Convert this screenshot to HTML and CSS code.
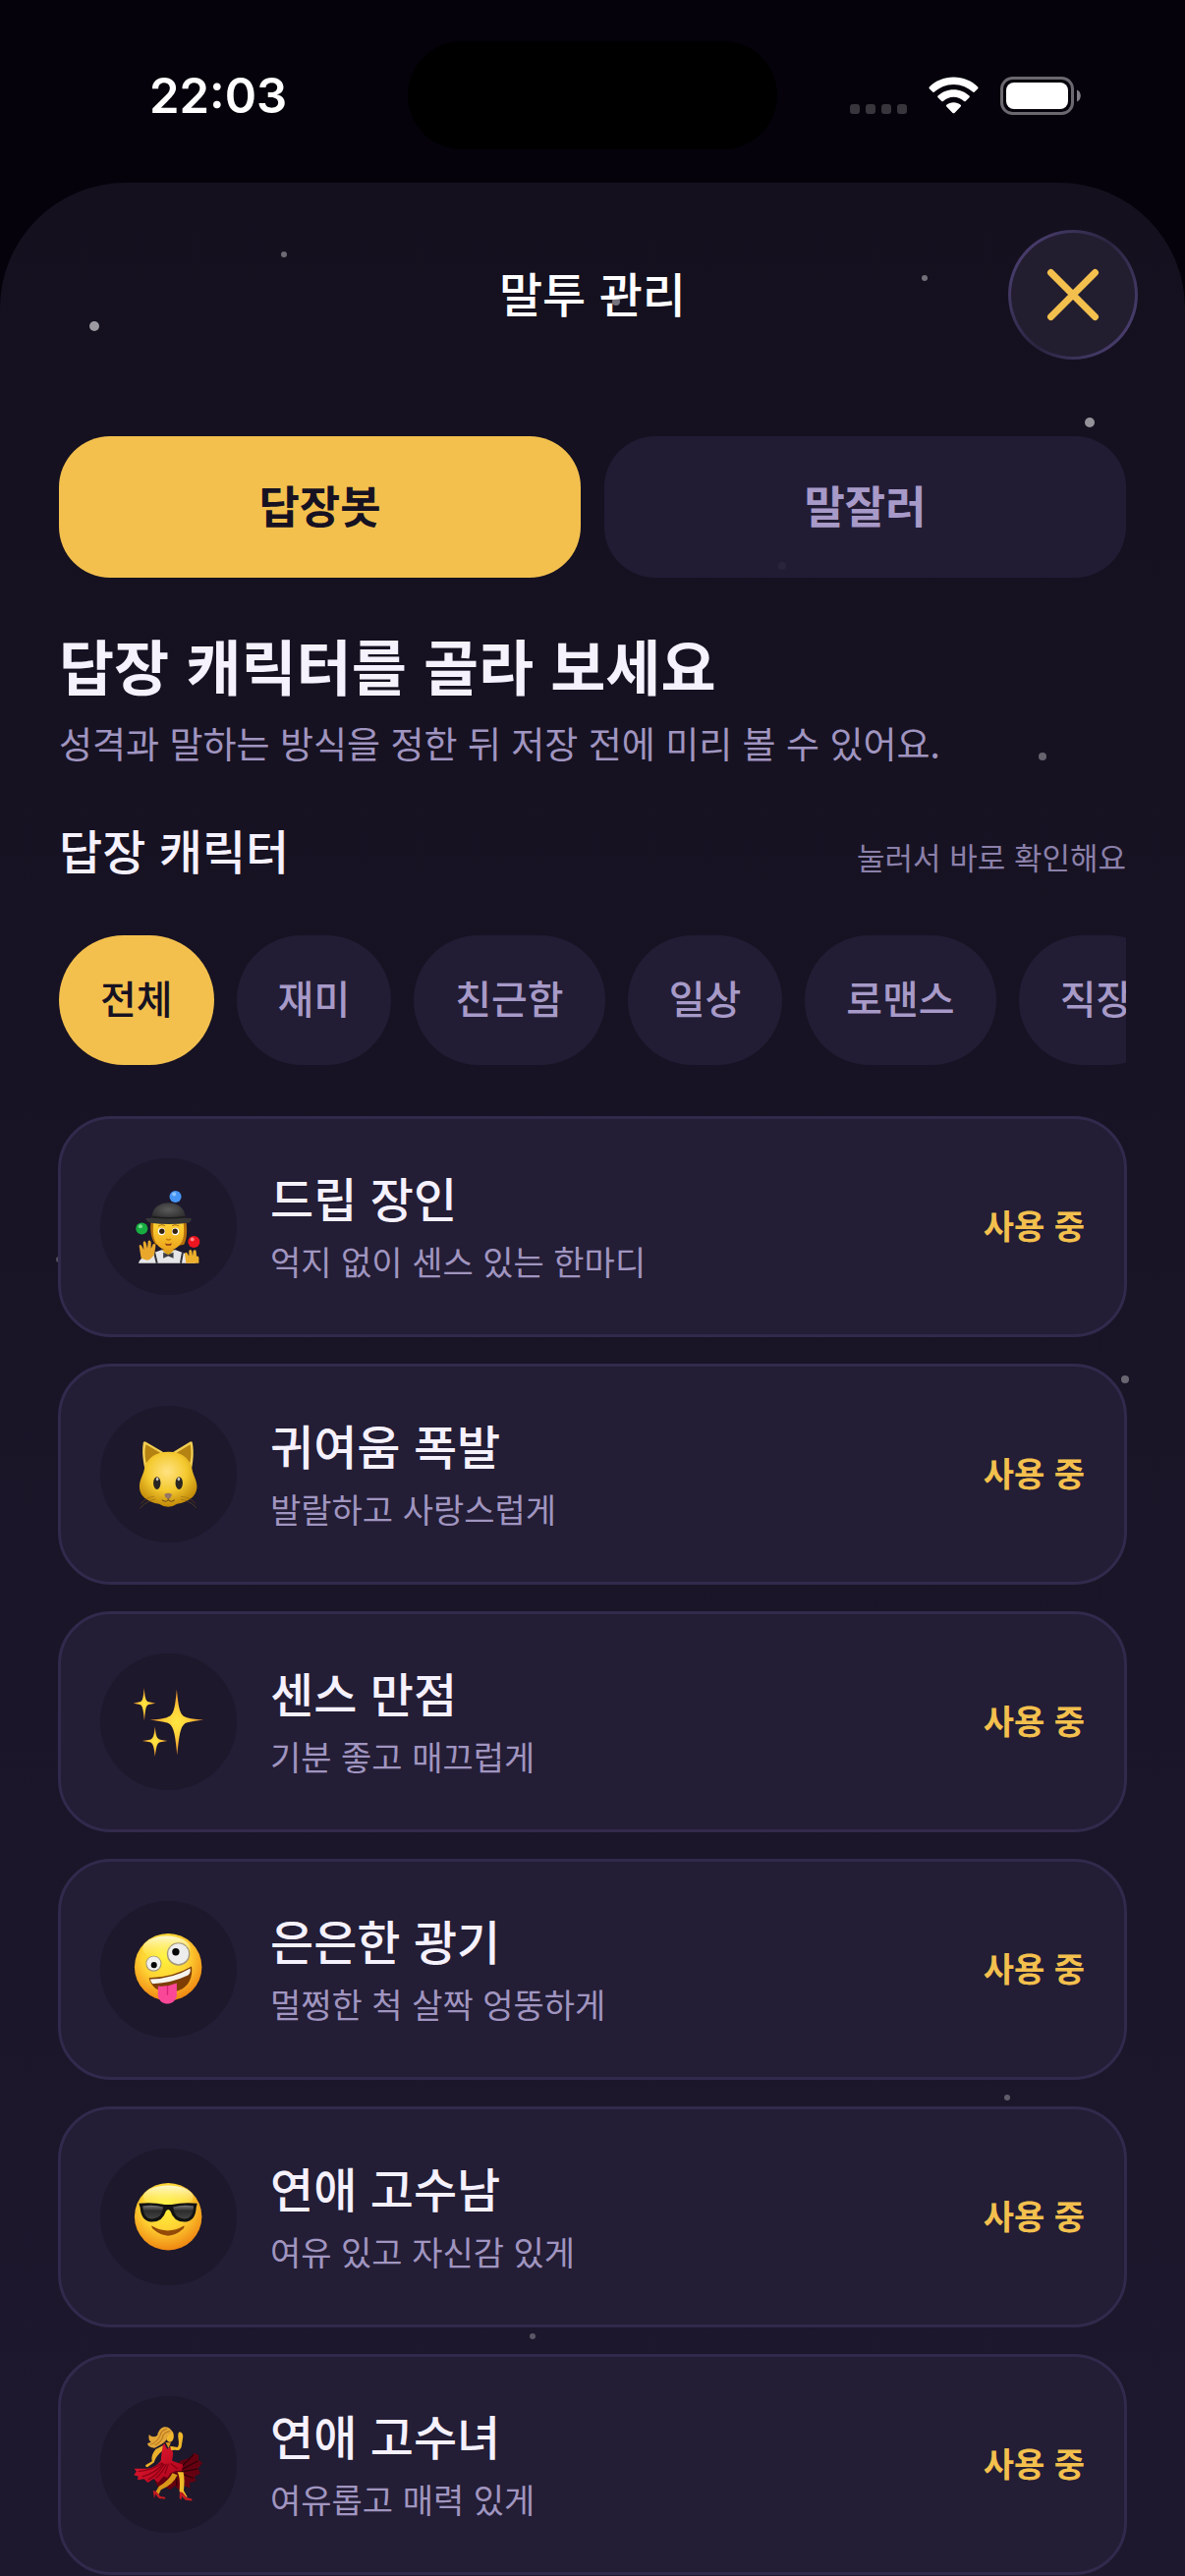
FILE: index.html
```
<!DOCTYPE html>
<html lang="ko">
<head>
    <meta charset="UTF-8">
    <meta name="viewport" content="width=device-width, initial-scale=1.0">
    <title>말투 관리</title>
    <link rel="stylesheet" href="styles.css">
</head>
<body>
    <div class="status-bar">
        <time class="status-time">22:03</time>
        <div class="island"></div>
        <div class="status-icons">
            <svg width="58" height="38" viewBox="0 0 58 38" fill="#38353d">
                <rect x="0" y="28" width="10" height="10" rx="3" />
                <rect x="16" y="28" width="10" height="10" rx="3" />
                <rect x="32" y="28" width="10" height="10" rx="3" />
                <rect x="48" y="28" width="10" height="10" rx="3" />
            </svg>
            <svg width="51" height="38" viewBox="0 0 51 38" fill="#fff">
                <path d="M25.500 0.500C35.200 0.500 44 4.300 50.200 10.500Q51 11.400 50.200 12.300L46.600 15.700Q45.800 16.300 45 15.600C39.800 10.800 33 7.900 25.500 7.900S11.200 10.800 6 15.600Q5.200 16.300 4.400 15.700L.8 12.300Q0 11.400 .8 10.500C7 4.300 15.800 .5 25.500 .5Z" />
                <path d="M25.500 13.300C31.800 13.300 37.300 15.600 41.500 19.600Q42.300 20.400 41.500 21.200L37.700 25Q36.900 25.700 36.100 25C33.200 22.300 29.600 20.700 25.500 20.700S17.800 22.300 14.900 25Q14.100 25.700 13.300 25L9.500 21.200Q8.700 20.400 9.500 19.600C13.700 15.600 19.200 13.300 25.500 13.300Z" />
                <path d="M25.500 26.200C28.300 26.200 30.800 27.100 32.700 28.800Q33.500 29.500 32.700 30.400L26.500 36.900Q25.500 37.700 24.500 36.900L18.300 30.400Q17.500 29.500 18.300 28.800C20.200 27.100 22.700 26.200 25.500 26.200Z" />
            </svg>
            <svg width="82" height="39" viewBox="0 0 82 39">
                <rect x="1.500" y="1.500" width="72" height="36" rx="11" fill="none" stroke="#6b686f" stroke-width="3" />
                <rect x="6" y="6" width="63" height="27" rx="8" fill="#fff" />
                <path d="M78 13.500C83 15 83 24 78 25.500Z" fill="#807d84" />
            </svg>
        </div>
    </div>

    <main class="sheet">
        <svg class="stars" viewBox="0 0 1206 2436" fill="#fff" aria-hidden="true">
            <circle cx="96" cy="146" r="5" opacity=".58" />
            <circle cx="289" cy="73" r="3" opacity=".38" />
            <circle cx="627" cy="121" r="4" opacity=".42" />
            <circle cx="941" cy="97" r="3" opacity=".4" />
            <circle cx="1109" cy="244" r="5" opacity=".55" />
            <circle cx="796" cy="390" r="4" opacity=".4" />
            <circle cx="1061" cy="584" r="4" opacity=".35" />
            <circle cx="60" cy="1096" r="3" opacity=".25" />
            <circle cx="1145" cy="1218" r="4" opacity=".35" />
            <circle cx="1025" cy="1949" r="3" opacity=".3" />
            <circle cx="542" cy="2192" r="3" opacity=".28" />
        </svg>

        <header class="sheet-header">
            <h1>말투 관리</h1>
            <button class="close-button" aria-label="닫기">
                <svg width="54" height="54" viewBox="0 0 54 54" fill="none" stroke="#f3c04e" stroke-width="7" stroke-linecap="round">
                    <path d="M4.500 4.500L49.500 49.500M49.500 4.500L4.500 49.500" />
                </svg>
            </button>
        </header>

        <div class="content">
            <div class="tabs">
                <button class="tab active">답장봇</button>
                <button class="tab">말잘러</button>
            </div>

            <h2>답장 캐릭터를 골라 보세요</h2>
            <p class="intro">성격과 말하는 방식을 정한 뒤 저장 전에 미리 볼 수 있어요.</p>

            <div class="section-head">
                <h3>답장 캐릭터</h3>
                <span class="hint">눌러서 바로 확인해요</span>
            </div>

            <div class="chips">
                <button class="chip active">전체</button>
                <button class="chip">재미</button>
                <button class="chip">친근함</button>
                <button class="chip">일상</button>
                <button class="chip">로맨스</button>
                <button class="chip">직장</button>
            </div>

            <div class="cards">
                <button class="card">
                    <svg class="avatar" viewBox="6 30 414 414">
                        <defs>
                            <radialGradient id="hat" cx=".5" cy=".4" r=".6">
                                <stop offset="0" stop-color="#5b5b5b" />
                                <stop offset="1" stop-color="#2c2c2d" />
                            </radialGradient>
                            <linearGradient id="skin" x1="0" y1="0" x2="0" y2="1">
                                <stop offset="0" stop-color="#ffd536" />
                                <stop offset="1" stop-color="#eba41c" />
                            </linearGradient>
                        </defs>
                        <!-- shirt and braces -->
                        <path d="M122 348C126 334 140 326 160 319L192 308H234L262 318C278 326 290 336 296 348Z" fill="#e6e6e8" />
                        <path d="M170 315L178 348M256 315L250 348" stroke="#33343a" stroke-width="6" />
                        <path d="M192 306L212 326L232 306Z" fill="#dba01d" />
                        <path d="M197 315L212 322L228 315V333L212 326L197 333Z" fill="#3d3e43" />
                        <!-- head -->
                        <path d="M160 220H266C271 250 268 276 260 291L246 294L174 291C161 278 156 248 160 220Z" fill="#b66f0c" />
                        <path d="M168 222H258C262 262 260 286 236 302Q212 317 190 302C165 284 165 258 168 222Z" fill="url(#skin)" />
                        <circle cx="192" cy="252" r="11" fill="#fff" />
                        <circle cx="234" cy="252" r="11" fill="#fff" />
                        <circle cx="193" cy="251" r="8" fill="#33200d" />
                        <circle cx="233" cy="251" r="8" fill="#33200d" />
                        <path d="M182 236Q192 228 202 235M224 235Q234 228 245 236" fill="none" stroke="#a56a0d" stroke-width="3" />
                        <path d="M206 274Q213 280 220 274" fill="none" stroke="#c57d0b" stroke-width="4" />
                        <path d="M202 287Q212 292 223 287L220 294H206Z" fill="#8d3a12" />
                        <!-- hat -->
                        <path d="M162 216C160 182 184 165 213 165S266 182 264 216Z" fill="url(#hat)" />
                        <path d="M145 212Q213 207 282 212Q284 222 272 226Q214 233 158 226Q144 221 145 212Z" fill="#363637" />
                        <path d="M164 208Q213 214 263 208" fill="none" stroke="#1c1c1d" stroke-width="4" />
                        <!-- hands -->
                        <path d="M130 333L124 296Q126 288 132 296L138 307L136 286Q140 276 145 287L149 303L151 282Q157 274 160 285V304L166 290Q174 286 174 296L170 321Q160 338 148 339Z" fill="#e9a72c" />
                        <path d="M266 348L262 319Q267 311 272 321L275 328V311Q280 302 284 312L286 326L288 310Q296 304 297 314L298 327Q306 325 305 337V348Z" fill="#edb02c" />
                        <!-- balls -->
                        <circle cx="234" cy="146" r="18" fill="#4695f5" />
                        <circle cx="230" cy="139" r="6" fill="#8cc2ff" />
                        <circle cx="132" cy="243" r="18" fill="#17ad40" />
                        <circle cx="128" cy="236" r="6" fill="#7be294" />
                        <circle cx="290" cy="283" r="18" fill="#ed1520" />
                        <circle cx="285" cy="276" r="6" fill="#ff7e80" />
                    </svg>
                    <span class="card-text">
                        <strong>드립 장인</strong>
                        <small>억지 없이 센스 있는 한마디</small>
                    </span>
                    <span class="badge">사용 중</span>
                </button>

                <button class="card">
                    <svg class="avatar" viewBox="6 36 414 414">
                        <defs>
                            <radialGradient id="fur" cx=".48" cy=".36" r=".62">
                                <stop offset="0" stop-color="#ffe382" />
                                <stop offset=".55" stop-color="#f4c92f" />
                                <stop offset="1" stop-color="#c48c0a" />
                            </radialGradient>
                        </defs>
                        <path d="M141 226C133 192 133 164 137 147Q139 142 146 146L197 176L180 202Z" fill="#f2ce52" />
                        <path d="M283 226C290 192 289 164 285 147Q283 142 276 146L227 176L243 202Z" fill="#f2ce52" />
                        <path d="M145 209C140 184 141 165 145 153L188 178Z" fill="#b58312" />
                        <path d="M278 209C283 184 281 165 279 153L237 178Z" fill="#b58312" />
                        <path d="M212 175C248 174 277 192 284 225C287 245 297 257 299 277C301 313 267 329 239 333Q226 342 212 342T184 333C155 329 123 313 125 277C127 255 137 245 140 225C148 192 176 176 212 175Z" fill="url(#fur)" />
                        <ellipse cx="178" cy="270" rx="11" ry="19" fill="#292623" />
                        <ellipse cx="245" cy="270" rx="11" ry="19" fill="#292623" />
                        <ellipse cx="179" cy="258" rx="4" ry="5" fill="#c5c4be" />
                        <ellipse cx="244" cy="258" rx="4" ry="5" fill="#c5c4be" />
                        <path d="M201 304Q212 297 223 304Q222 315 212 319Q201 314 201 304Z" fill="#947765" />
                        <path d="M212 317V322M193 321Q205 330 212 321Q221 330 232 321" fill="none" stroke="#735017" stroke-width="3" />
                        <path d="M170 311Q145 312 130 333M174 319Q151 321 126 346M250 311Q278 312 294 332M250 319Q276 322 298 345" fill="none" stroke="#8b611c" stroke-width="2" opacity=".7" />
                    </svg>
                    <span class="card-text">
                        <strong>귀여움 폭발</strong>
                        <small>발랄하고 사랑스럽게</small>
                    </span>
                    <span class="badge">사용 중</span>
                </button>

                <button class="card">
                    <svg class="avatar" viewBox="6 42 414 414">
                        <defs>
                            <radialGradient id="spark">
                                <stop offset="0" stop-color="#ffe640" />
                                <stop offset=".4" stop-color="#ffd23b" />
                                <stop offset="1" stop-color="#ee8a2c" />
                            </radialGradient>
                        </defs>
                        <g fill="url(#spark)">
                            <path d="M238 151C244 213 248 233 271 237Q290 241 320 243Q290 246 270 251C249 256 246 285 239 350C233 285 229 258 209 252Q190 247 156 243Q190 241 208 236C230 230 232 211 238 151Z" />
                            <path d="M139 146C142 178 144 186 153 189L174 193L153 197C144 200 143 211 140 246C136 211 135 200 126 197L106 193L126 189C135 186 136 178 139 146Z" />
                            <path d="M172 263C175 292 177 300 188 303L210 307L188 311C178 314 176 324 172 355C169 324 166 314 157 311L133 307L157 303C167 300 169 292 172 263Z" />
                        </g>
                    </svg>
                    <span class="card-text">
                        <strong>센스 만점</strong>
                        <small>기분 좋고 매끄럽게</small>
                    </span>
                    <span class="badge">사용 중</span>
                </button>

                <button class="card">
                    <svg class="avatar" viewBox="6 48 414 414">
                        <defs>
                            <radialGradient id="face" cx=".45" cy=".34" r=".68">
                                <stop offset="0" stop-color="#fff43d" />
                                <stop offset=".5" stop-color="#ffd434" />
                                <stop offset="1" stop-color="#ee8210" />
                            </radialGradient>
                            <linearGradient id="shine" x1="0" y1="0" x2="0" y2="1">
                                <stop offset="0" stop-color="#fffde0" stop-opacity=".9" />
                                <stop offset="1" stop-color="#fff35c" stop-opacity="0" />
                            </linearGradient>
                        </defs>
                        <circle cx="212" cy="248" r="102" fill="url(#face)" />
                        <ellipse cx="207" cy="191" rx="72" ry="37" fill="url(#shine)" />
                        <circle cx="168" cy="238" r="24" fill="#a4987d" />
                        <circle cx="168" cy="237" r="21" fill="#f0f0ef" />
                        <circle cx="169" cy="242" r="9" fill="#060606" />
                        <circle cx="243" cy="209" r="35" fill="#a4987d" />
                        <circle cx="243" cy="208" r="31" fill="#ededed" />
                        <circle cx="235" cy="202" r="11" fill="#060606" />
                        <path d="M154 281Q228 279 283 246C288 287 267 321 221 324C186 327 160 310 154 281Z" fill="#7d3d03" />
                        <path d="M158 285Q227 283 279 252Q281 266 272 273Q225 296 165 299Q158 293 158 285Z" fill="#f6f4ee" />
                        <path d="M181 306Q209 309 238 297V331C237 368 184 369 181 333Z" fill="#fb4798" />
                        <path d="M210 306V331" stroke="#d72376" stroke-width="4" stroke-linecap="round" />
                    </svg>
                    <span class="card-text">
                        <strong>은은한 광기</strong>
                        <small>멀쩡한 척 살짝 엉뚱하게</small>
                    </span>
                    <span class="badge">사용 중</span>
                </button>

                <button class="card">
                    <svg class="avatar" viewBox="6 24 414 414">
                        <defs>
                            <linearGradient id="lens" x1="0" y1="0" x2="0" y2="1">
                                <stop offset="0" stop-color="#777" />
                                <stop offset=".4" stop-color="#2c2c2c" />
                                <stop offset="1" stop-color="#444" />
                            </linearGradient>
                        </defs>
                        <circle cx="212" cy="230" r="102" fill="url(#face)" />
                        <ellipse cx="212" cy="170" rx="76" ry="34" fill="url(#shine)" />
                        <path d="M123 190Q165 185 202 194H222Q260 185 300 190L297 203Q295 242 266 246Q230 249 219 214Q212 204 205 214Q194 249 158 246Q130 242 127 203Z" fill="#121212" />
                        <path d="M135 198Q168 193 197 201Q195 234 164 237Q136 236 135 198Z" fill="url(#lens)" />
                        <path d="M289 198Q256 193 227 201Q229 234 260 237Q288 236 289 198Z" fill="url(#lens)" />
                        <path d="M162 258Q211 287 260 258Q263 260 258 267Q212 309 165 267Q160 260 162 258Z" fill="#944a08" />
                    </svg>
                    <span class="card-text">
                        <strong>연애 고수남</strong>
                        <small>여유 있고 자신감 있게</small>
                    </span>
                    <span class="badge">사용 중</span>
                </button>

                <button class="card">
                    <svg class="avatar" viewBox="6 30 414 414">
                        <defs>
                            <linearGradient id="dress" x1="0" y1="0" x2="1" y2="1">
                                <stop offset="0" stop-color="#ef2137" />
                                <stop offset="1" stop-color="#a70018" />
                            </linearGradient>
                        </defs>
                        <!-- back of the skirt -->
                        <path d="M172 286L184 312L196 300L218 314L232 302L250 319L260 301L279 309L276 293L297 287L291 274L310 263L302 250L316 232L304 224L304 208L290 202L278 217L250 226L218 258Z" fill="#650011" />
                        <path d="M247 249L289 207M251 253L302 226M250 260L302 250M246 263L288 278M244 264L261 298M235 264L238 302" stroke="#320009" stroke-width="4" />
                        <!-- legs -->
                        <path d="M225 263Q214 286 184 303L174 320L181 333L190 314Q227 298 240 269Z" fill="#d89719" />
                        <path d="M240 260Q250 278 246 318L258 338L270 335L259 316Q263 283 258 260Z" fill="#efba29" />
                        <path d="M166 316L175 318L189 334L203 336V342L184 340L173 327L170 341Z" fill="#c01b23" />
                        <path d="M247 320L256 322L268 337L284 341V347L264 345L254 333L251 345L246 338Z" fill="#c01b23" />
                        <!-- dress -->
                        <path d="M194 181L200 173L209 190L222 183L227 204L224 226L257 238L253 256Q238 254 219 263L210 277L198 273L181 292L168 280L150 292L139 281L119 284L121 273L108 269L116 258L109 250L149 250Q175 246 190 225Z" fill="url(#dress)" />
                        <path d="M194 231Q171 253 121 258M197 234Q174 263 133 274M201 235Q178 270 152 282M207 235Q196 261 174 279M213 235L202 265M219 234L240 250" fill="none" stroke="#8d0015" stroke-width="4" />
                        <!-- arms -->
                        <path d="M196 180L174 191Q158 211 163 227L145 238Q140 243 149 245L169 231Q175 211 193 197Z" fill="#eab02b" />
                        <path d="M218 181L240 185Q246 179 243 160Q240 142 246 138Q257 140 257 153L252 184Q246 197 235 193L221 194Z" fill="#efb72a" />
                        <path d="M204 170L220 171L213 188Z" fill="#d6951b" />
                        <!-- head and hair -->
                        <ellipse cx="217" cy="151" rx="12" ry="18" fill="#f1b82e" />
                        <path d="M225 139Q217 122 200 123Q184 126 179 149Q165 158 154 146Q151 164 160 169L149 173Q151 186 171 187L190 177Q210 165 211 149Z" fill="#e2a638" />
                        <path d="M208 128Q190 134 187 151Q178 170 158 177M217 136Q196 140 194 158Q186 173 172 178" fill="none" stroke="#b8751b" stroke-width="3" />
                    </svg>
                    <span class="card-text">
                        <strong>연애 고수녀</strong>
                        <small>여유롭고 매력 있게</small>
                    </span>
                    <span class="badge">사용 중</span>
                </button>
            </div>
        </div>
    </main>
</body>
</html>
```
FILE: styles.css
```
* {
    box-sizing: border-box;
}

body {
    margin: 0;
    min-height: 100vh;
    display: flex;
    flex-direction: column;
    background-color: #05020b;
    color: #f5f1fd;
    font-family: "Noto Sans CJK KR", sans-serif;
}

h1, h2, h3, p {
    margin: 0;
}

button {
    margin: 0;
    padding: 0;
    border: none;
    font-family: inherit;
    color: inherit;
    cursor: pointer;
}

/* Status bar */
.status-bar {
    display: grid;
    grid-template-columns: 1fr 376px 1fr;
    align-items: center;
    padding: 42px 106px 34px;
}

.status-time {
    padding-top: 2px;
    padding-left: 46px;
    font-family: Inter, sans-serif;
    font-size: 49px;
    font-weight: 600;
    line-height: 60px;
    color: #fff;
}

.island {
    height: 110px;
    border-radius: 55px;
    background-color: #000;
}

.status-icons {
    display: flex;
    align-items: center;
    justify-content: flex-end;
    gap: 22px;
}

/* Sheet */
.sheet {
    position: relative;
    flex: 1;
    padding-top: 48px;
    border-radius: 128px 128px 0 0;
    background: linear-gradient(#14101e, #1e182e);
    overflow: hidden;
}

.stars {
    position: absolute;
    top: 0;
    left: 0;
    width: 100%;
}

.sheet-header {
    position: relative;
    display: grid;
    grid-template-columns: 132px 1fr 132px;
    align-items: center;
    padding: 0 48px;
}

.sheet-header h1 {
    grid-column: 2;
    padding-bottom: 6px;
    font-size: 48px;
    font-weight: 500;
    line-height: 64px;
    text-align: center;
    color: #fff;
}

.close-button {
    display: flex;
    align-items: center;
    justify-content: center;
    height: 132px;
    border: 3px solid transparent;
    border-radius: 50%;
    background: linear-gradient(#231d30, #231d30) padding-box,
        linear-gradient(125deg, #52467c, #2b2440 50%, #52467c) border-box;
}

.content {
    position: relative;
    padding: 78px 60px 0;
}

/* Tabs */
.tabs {
    display: grid;
    grid-template-columns: 1fr 1fr;
    gap: 24px;
}

.tab {
    height: 144px;
    padding-bottom: 6px;
    border-radius: 52px;
    background-color: rgba(35, 29, 54, 0.92);
    color: #a79ac8;
    font-size: 45px;
    font-weight: 700;
}

.tab.active,
.chip.active {
    background-color: #f3c04e;
    color: #171222;
}

/* Headings */
.content h2 {
    margin-top: 48px;
    font-size: 61px;
    font-weight: 700;
    line-height: 82px;
}

.intro {
    margin-top: 10px;
    font-size: 37px;
    line-height: 56px;
    color: #a095c0;
}

.section-head {
    display: flex;
    align-items: baseline;
    justify-content: space-between;
    margin-top: 48px;
}

.section-head h3 {
    font-size: 48px;
    font-weight: 500;
    line-height: 64px;
}

.hint {
    font-size: 31px;
    line-height: 48px;
    color: #8b80aa;
}

/* Filter chips */
.chips {
    display: flex;
    gap: 23px;
    margin-top: 56px;
    overflow: hidden;
}

.chip {
    flex: none;
    height: 132px;
    padding: 0 42px 6px;
    border-radius: 66px;
    background-color: #221d34;
    color: #a79ac8;
    font-size: 40px;
    font-weight: 500;
}

/* Character cards */
.cards {
    display: flex;
    flex-direction: column;
    gap: 27px;
    margin: 52px -1px 0;
}

.card {
    display: flex;
    align-items: center;
    gap: 34px;
    padding: 40px;
    border: 3px solid #322a4c;
    border-radius: 54px;
    background-color: #231d35;
    text-align: left;
}

.avatar {
    flex: none;
    width: 139px;
    height: 139px;
    border-radius: 50%;
    background-color: #1d182b;
}

.card-text {
    flex: 1;
    display: flex;
    flex-direction: column;
    gap: 6px;
}

.card-text strong {
    font-size: 48px;
    font-weight: 500;
    line-height: 64px;
}

.card-text small {
    font-size: 34px;
    line-height: 56px;
    color: #a095c0;
}

.badge {
    padding-bottom: 4px;
    font-size: 34px;
    font-weight: 700;
    color: #f3c04e;
}
```
